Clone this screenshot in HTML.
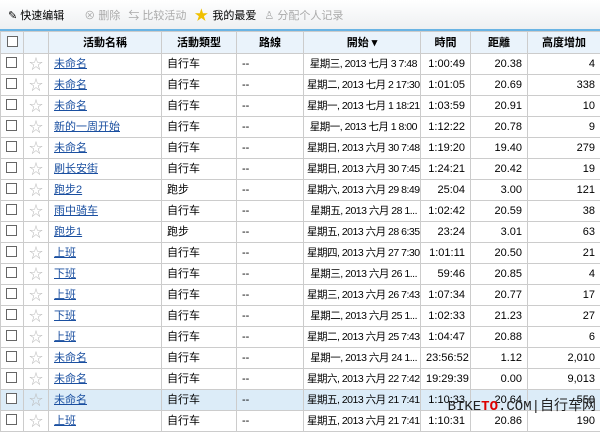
<!DOCTYPE html>
<html><head><meta charset="utf-8"><style>
body{margin:0;width:600px;height:421px;overflow:hidden;background:#fff;font-family:"Liberation Sans","Noto Sans CJK SC",sans-serif;font-size:11px;color:#000;position:relative}
.tb{height:29px;background:linear-gradient(#fff,#eef0f2);border-bottom:2px solid #6ab4e4;display:flex;align-items:center;font-size:11px}
.tb span{margin-left:8px;display:flex;align-items:center;gap:4px}
.g{color:#aaa}
table{border-collapse:collapse;table-layout:fixed;width:600px;position:absolute;top:31px;left:0}
td,th{border:1px solid #ccc;padding:0 5px;height:20px;line-height:12px;white-space:nowrap;overflow:hidden}
th{background:#eaf3fb;height:21px;font-weight:bold}
.r{text-align:right}
td.d{font-size:10.5px;letter-spacing:-0.5px;padding:0 3px}
a{color:#1a4fa0;text-decoration:underline}
.cb{display:inline-block;width:9px;height:9px;border:1px solid #666;background:#fff}
.st{color:#bbb;font-size:14px}
tr.h td{background:#dcecf8}
.wm{position:absolute;right:4px;bottom:6px;font-family:"Liberation Mono","Noto Sans CJK SC",monospace;font-size:14px;color:#222}
</style></head><body>
<div class="tb"><span>✎ 快速编辑</span><span class="g" style="margin-left:20px">⊗ 删除</span><span class="g">⇆ 比较活动</span><span><b style="color:#f0c000;font-size:14px">★</b>我的最爱</span><span class="g">♙ 分配个人记录</span></div>
<table>
<colgroup><col style="width:23px"><col style="width:25px"><col style="width:113px"><col style="width:75px"><col style="width:67px"><col style="width:117px"><col style="width:50px"><col style="width:57px"><col style="width:73px"></colgroup>
<tr><th><span class="cb"></span></th><th></th><th>活動名稱</th><th>活動類型</th><th>路線</th><th>開始 ▾</th><th>時間</th><th>距離</th><th>高度增加</th></tr>
<tr><td><span class="cb"></span></td><td class="st">☆</td><td><a>未命名</a></td><td>自行车</td><td>--</td><td class="r d">星期三, 2013 七月 3 7:48</td><td class="r">1:00:49</td><td class="r">20.38</td><td class="r">4</td></tr>
<tr><td><span class="cb"></span></td><td class="st">☆</td><td><a>未命名</a></td><td>自行车</td><td>--</td><td class="r d">星期二, 2013 七月 2 17:30</td><td class="r">1:01:05</td><td class="r">20.69</td><td class="r">338</td></tr>
<tr><td><span class="cb"></span></td><td class="st">☆</td><td><a>未命名</a></td><td>自行车</td><td>--</td><td class="r d">星期一, 2013 七月 1 18:21</td><td class="r">1:03:59</td><td class="r">20.91</td><td class="r">10</td></tr>
<tr><td><span class="cb"></span></td><td class="st">☆</td><td><a>新的一周开始</a></td><td>自行车</td><td>--</td><td class="r d">星期一, 2013 七月 1 8:00</td><td class="r">1:12:22</td><td class="r">20.78</td><td class="r">9</td></tr>
<tr><td><span class="cb"></span></td><td class="st">☆</td><td><a>未命名</a></td><td>自行车</td><td>--</td><td class="r d">星期日, 2013 六月 30 7:48</td><td class="r">1:19:20</td><td class="r">19.40</td><td class="r">279</td></tr>
<tr><td><span class="cb"></span></td><td class="st">☆</td><td><a>刷长安街</a></td><td>自行车</td><td>--</td><td class="r d">星期日, 2013 六月 30 7:45</td><td class="r">1:24:21</td><td class="r">20.42</td><td class="r">19</td></tr>
<tr><td><span class="cb"></span></td><td class="st">☆</td><td><a>跑步2</a></td><td>跑步</td><td>--</td><td class="r d">星期六, 2013 六月 29 8:49</td><td class="r">25:04</td><td class="r">3.00</td><td class="r">121</td></tr>
<tr><td><span class="cb"></span></td><td class="st">☆</td><td><a>雨中骑车</a></td><td>自行车</td><td>--</td><td class="r d">星期五, 2013 六月 28 1...</td><td class="r">1:02:42</td><td class="r">20.59</td><td class="r">38</td></tr>
<tr><td><span class="cb"></span></td><td class="st">☆</td><td><a>跑步1</a></td><td>跑步</td><td>--</td><td class="r d">星期五, 2013 六月 28 6:35</td><td class="r">23:24</td><td class="r">3.01</td><td class="r">63</td></tr>
<tr><td><span class="cb"></span></td><td class="st">☆</td><td><a>上班</a></td><td>自行车</td><td>--</td><td class="r d">星期四, 2013 六月 27 7:30</td><td class="r">1:01:11</td><td class="r">20.50</td><td class="r">21</td></tr>
<tr><td><span class="cb"></span></td><td class="st">☆</td><td><a>下班</a></td><td>自行车</td><td>--</td><td class="r d">星期三, 2013 六月 26 1...</td><td class="r">59:46</td><td class="r">20.85</td><td class="r">4</td></tr>
<tr><td><span class="cb"></span></td><td class="st">☆</td><td><a>上班</a></td><td>自行车</td><td>--</td><td class="r d">星期三, 2013 六月 26 7:43</td><td class="r">1:07:34</td><td class="r">20.77</td><td class="r">17</td></tr>
<tr><td><span class="cb"></span></td><td class="st">☆</td><td><a>下班</a></td><td>自行车</td><td>--</td><td class="r d">星期二, 2013 六月 25 1...</td><td class="r">1:02:33</td><td class="r">21.23</td><td class="r">27</td></tr>
<tr><td><span class="cb"></span></td><td class="st">☆</td><td><a>上班</a></td><td>自行车</td><td>--</td><td class="r d">星期二, 2013 六月 25 7:43</td><td class="r">1:04:47</td><td class="r">20.88</td><td class="r">6</td></tr>
<tr><td><span class="cb"></span></td><td class="st">☆</td><td><a>未命名</a></td><td>自行车</td><td>--</td><td class="r d">星期一, 2013 六月 24 1...</td><td class="r">23:56:52</td><td class="r">1.12</td><td class="r">2,010</td></tr>
<tr><td><span class="cb"></span></td><td class="st">☆</td><td><a>未命名</a></td><td>自行车</td><td>--</td><td class="r d">星期六, 2013 六月 22 7:42</td><td class="r">19:29:39</td><td class="r">0.00</td><td class="r">9,013</td></tr>
<tr class="h"><td><span class="cb"></span></td><td class="st">☆</td><td><a>未命名</a></td><td>自行车</td><td>--</td><td class="r d">星期五, 2013 六月 21 7:41</td><td class="r">1:10:33</td><td class="r">20.64</td><td class="r">550</td></tr>
<tr><td><span class="cb"></span></td><td class="st">☆</td><td><a>上班</a></td><td>自行车</td><td>--</td><td class="r d">星期五, 2013 六月 21 7:41</td><td class="r">1:10:31</td><td class="r">20.86</td><td class="r">190</td></tr>
</table>
<div class="wm">BIKE<b style="color:#d00">TO</b>.COM|自行车网</div>
</body></html>
